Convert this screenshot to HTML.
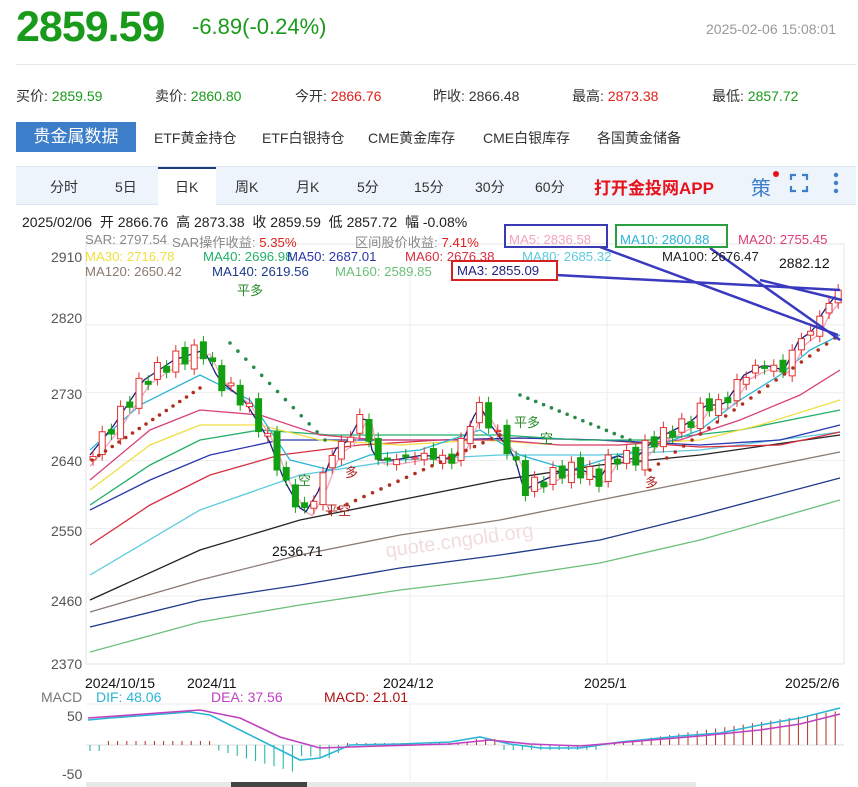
<!DOCTYPE html><html><head><meta charset="utf-8"><style>
body{margin:0;width:858px;height:787px;background:#fff;font-family:"Liberation Sans","Noto Sans CJK SC",sans-serif;overflow:hidden;position:relative}
.a{position:absolute;white-space:nowrap}
.g{color:#1a9a1a}.r{color:#e0201c}
.s{font-size:13.2px}
</style></head><body>
<div class="a g" style="left:16px;top:3px;font-size:43px;font-weight:bold;letter-spacing:-1px">2859.59</div>
<div class="a g" style="left:192px;top:14px;font-size:22px">-6.89(-0.24%)</div>
<div class="a" style="left:706px;top:21px;font-size:14px;color:#999">2025-02-06 15:08:01</div>
<div class="a" style="left:16px;top:64px;width:840px;border-top:1px solid #e6e6e6"></div>
<div class="a" style="left:0;top:86px;font-size:14px;color:#333">
<span class="a" style="left:16px">买价: <span class="g">2859.59</span></span>
<span class="a" style="left:155px">卖价: <span class="g">2860.80</span></span>
<span class="a" style="left:295px">今开: <span class="r">2866.76</span></span>
<span class="a" style="left:433px">昨收: 2866.48</span>
<span class="a" style="left:572px">最高: <span class="r">2873.38</span></span>
<span class="a" style="left:712px">最低: <span class="g">2857.72</span></span></div>
<div class="a" style="left:16px;top:122px;width:120px;height:30px;background:#3c7ec9;color:#fff;font-size:17px;line-height:30px;text-align:center">贵金属数据</div>
<div class="a" style="left:0;top:128px;font-size:14px;color:#333">
<span class="a" style="left:154px">ETF黄金持仓</span><span class="a" style="left:262px">ETF白银持仓</span><span class="a" style="left:368px">CME黄金库存</span><span class="a" style="left:483px">CME白银库存</span><span class="a" style="left:597px">各国黄金储备</span></div>
<div class="a" style="left:16px;top:166px;width:840px;height:37px;background:#eef4fc;border-top:1px solid #dde6f0;border-bottom:1px solid #dde6f0"></div>
<div class="a" style="left:158px;top:167px;width:58px;height:37px;background:#fff;border-top:2px solid #1d3a7a"></div>
<div class="a" style="left:0;top:177px;font-size:14px;color:#333">
<span class="a" style="left:50px">分时</span><span class="a" style="left:115px">5日</span><span class="a" style="left:175px">日K</span><span class="a" style="left:235px">周K</span><span class="a" style="left:296px">月K</span><span class="a" style="left:357px">5分</span><span class="a" style="left:414px">15分</span><span class="a" style="left:475px">30分</span><span class="a" style="left:535px">60分</span></div>
<div class="a" style="left:594px;top:174px;font-size:17px;font-weight:bold;color:#e8121a">打开金投网APP</div>
<div class="a" style="left:751px;top:172px;font-size:20px;color:#3c7ec9">策</div>
<div class="a" style="left:773px;top:171px;width:6px;height:6px;border-radius:3px;background:#e8121a"></div>
<svg class="a" style="left:789px;top:173px" width="20" height="20"><path d="M2 7V2H7M13 2H18V7M18 13V18H13M7 18H2V13" stroke="#3c7ec9" stroke-width="2.2" fill="none"/></svg>
<svg class="a" style="left:833px;top:172px" width="6" height="22"><circle cx="3" cy="3" r="2.2" fill="#3c7ec9"/><circle cx="3" cy="11" r="2.2" fill="#3c7ec9"/><circle cx="3" cy="19" r="2.2" fill="#3c7ec9"/></svg>
<div class="a" style="left:22px;top:212px;font-size:14px;color:#222">2025/02/06 &nbsp;开 2866.76 &nbsp;高 2873.38 &nbsp;收 2859.59 &nbsp;低 2857.72 &nbsp;幅 -0.08%</div>
<svg id="c" class="a" style="left:0;top:0" width="858" height="787"></svg>
<div class="a s" style="left:0;top:232px;color:#888">
<span class="a" style="left:85px">SAR: 2797.54</span><span class="a" style="left:172px">SAR操作收益: <span class="r">5.35%</span></span><span class="a" style="left:355px">区间股价收益: <span class="r">7.41%</span></span><span class="a" style="left:509px;color:#f3a4bf">MA5: 2836.58</span><span class="a" style="left:620px;color:#2bb5d5">MA10: 2800.88</span><span class="a" style="left:738px;color:#d8407a">MA20: 2755.45</span></div>
<div class="a" style="left:51px;top:249px;font-size:14px;color:#555">2910</div>
<div class="a s" style="left:0;top:249px">
<span class="a" style="left:85px;color:#f0de40">MA30: 2716.78</span><span class="a" style="left:203px;color:#22b06a">MA40: 2696.98</span><span class="a" style="left:287px;color:#2a36b0">MA50: 2687.01</span><span class="a" style="left:405px;color:#d83040">MA60: 2676.38</span><span class="a" style="left:522px;color:#5ccbe0">MA80: 2685.32</span><span class="a" style="left:662px;color:#222">MA100: 2676.47</span></div>
<div class="a s" style="left:0;top:264px">
<span class="a" style="left:85px;color:#8a7a72">MA120: 2650.42</span><span class="a" style="left:212px;color:#1e3a8a">MA140: 2619.56</span><span class="a" style="left:335px;color:#6cc07a">MA160: 2589.85</span></div>
<div class="a s" style="left:451px;top:260px;width:107px;height:21px;border:2px solid #d62020;box-sizing:border-box;color:#1e1e80;line-height:18px;padding-left:4px;background:#fff">MA3: 2855.09</div>
<div class="a" style="left:504px;top:224px;width:104px;height:24px;border:2px solid #3a3ab0;box-sizing:border-box"></div>
<div class="a" style="left:615px;top:224px;width:113px;height:24px;border:2px solid #2aa040;box-sizing:border-box"></div>
<div class="a" style="left:779px;top:255px;font-size:14px;color:#111">2882.12</div>
<div class="a" style="left:51px;top:310px;font-size:14px;color:#555">2820</div>
<div class="a" style="left:51px;top:386px;font-size:14px;color:#555">2730</div>
<div class="a" style="left:51px;top:453px;font-size:14px;color:#555">2640</div>
<div class="a" style="left:51px;top:523px;font-size:14px;color:#555">2550</div>
<div class="a" style="left:51px;top:593px;font-size:14px;color:#555">2460</div>
<div class="a" style="left:51px;top:656px;font-size:14px;color:#555">2370</div>
<div class="a" style="left:272px;top:543px;font-size:14px;color:#111">2536.71</div>
<div class="a" style="left:85px;top:675px;font-size:14px;color:#111">2024/10/15</div>
<div class="a" style="left:187px;top:675px;font-size:14px;color:#111">2024/11</div>
<div class="a" style="left:383px;top:675px;font-size:14px;color:#111">2024/12</div>
<div class="a" style="left:584px;top:675px;font-size:14px;color:#111">2025/1</div>
<div class="a" style="left:785px;top:675px;font-size:14px;color:#111">2025/2/6</div>
<div class="a" style="left:0;top:689px;font-size:14px">
<span class="a" style="left:41px;color:#777">MACD</span><span class="a" style="left:96px;color:#2bb5d5">DIF: 48.06</span><span class="a" style="left:211px;color:#c040c0">DEA: 37.56</span><span class="a" style="left:324px;color:#b01010">MACD: 21.01</span></div>
<div class="a" style="left:67px;top:708px;font-size:14px;color:#555">50</div>
<div class="a" style="left:62px;top:766px;font-size:14px;color:#555">-50</div>
<div class="a" style="left:237px;top:280px;font-size:13px;color:#2a8a2a">平多</div>
<div class="a" style="left:514px;top:412px;font-size:13px;color:#2a8a2a">平多</div>
<div class="a" style="left:325px;top:500px;font-size:13px;color:#b02020">平空</div>
<div class="a" style="left:540px;top:428px;font-size:13px;color:#2a8a2a">空</div>
<div class="a" style="left:298px;top:470px;font-size:13px;color:#2a8a2a">空</div>
<div class="a" style="left:345px;top:462px;font-size:13px;color:#b02020">多</div>
<div class="a" style="left:645px;top:472px;font-size:13px;color:#b02020">多</div>
<div class="a" style="left:385px;top:530px;font-size:20px;color:#f2dcdc;transform:rotate(-8deg)">quote.cngold.org</div>
<script>
var s=document.getElementById('c'),h='';
function Y(v){return 257+(2910-v)*0.7537}
function pl(p,c,w){h+='<polyline fill="none" stroke="'+c+'" stroke-width="'+(w||1.3)+'" points="'+p.map(function(q){return q.join(',')}).join(' ')+'"/>'}
h+='<rect x="86" y="244" width="758" height="420" fill="none" stroke="#e4e4e4"/>';
[410,607].forEach(function(x){h+='<line x1="'+x+'" y1="244" x2="'+x+'" y2="664" stroke="#eee"/><line x1="'+x+'" y1="704" x2="'+x+'" y2="780" stroke="#eee"/>'});
[Y(2820),Y(2730),Y(2640),Y(2550),Y(2460)].forEach(function(y){h+='<line x1="86" y1="'+y+'" x2="844" y2="'+y+'" stroke="#eee"/>'});
h+='<line x1="86" y1="704" x2="844" y2="704" stroke="#eee"/>';
function interp(P,x){for(var i=1;i<P.length;i++)if(x<=P[i][0]){var a=P[i-1],b=P[i];return a[1]+(b[1]-a[1])*(x-a[0])/(b[0]-a[0])}return P[P.length-1][1]}
var C=[[90,450],[110,425],[140,380],[170,360],[200,350],[215,380],[240,400],[265,440],[280,480],[300,515],[315,490],[330,450],[345,440],[360,410],[370,460],[390,460],[420,455],[450,460],[475,405],[490,430],[510,455],[520,490],[540,480],[560,470],[580,470],[595,480],[610,455],[630,460],[650,440],[670,430],[690,420],[700,405],[720,405],[740,375],[760,365],[780,370],[795,340],[810,330],[820,310],[838,288]];
pl([[90,600],[200,550],[300,520],[400,500],[500,480],[600,465],[700,455],[840,435]],'#222');
pl([[90,612],[200,580],[300,555],[400,535],[500,520],[600,500],[700,480],[840,452]],'#8a7a72');
pl([[90,627],[200,600],[300,585],[400,568],[500,555],[600,540],[700,515],[840,478]],'#1e3a8a');
pl([[90,652],[200,622],[300,605],[400,590],[500,578],[600,563],[700,540],[840,500]],'#6cc07a');
pl([[90,575],[200,510],[300,475],[400,460],[500,455],[600,455],[700,450],[840,432]],'#5ccbe0');
pl([[90,545],[150,505],[210,475],[280,455],[360,445],[440,440],[520,438],[600,440],[700,447],[780,445],[840,432]],'#d83040');
pl([[90,510],[150,480],[210,455],[280,440],[360,440],[440,440],[520,438],[600,440],[700,445],[780,440],[840,425]],'#2a36b0');
pl([[90,505],[150,465],[200,440],[260,430],[330,435],[420,435],[500,435],[580,440],[650,440],[740,430],[840,410]],'#22b06a');
pl([[90,490],[150,445],[200,425],[260,425],[320,440],[400,445],[480,440],[560,445],[620,445],[700,440],[760,425],[840,400]],'#f0de40');
pl([[90,480],[150,430],[200,410],[260,415],[320,435],[380,440],[440,440],[500,440],[560,445],[620,445],[680,440],[740,420],[800,395],[840,370]],'#d8407a');
pl([[90,450],[140,405],[200,375],[250,400],[290,460],[330,470],[370,455],[420,450],[480,430],[520,455],[570,470],[620,455],[660,445],[700,430],[740,400],[780,375],[810,350],[840,335]],'#2bb5d5');
var m5=[],m3=[];for(var x=90;x<=840;x+=6){m5.push([x,interp(C,x-10)+4]);m3.push([x,interp(C,x-4)])}
pl(m5,'#f3a4bf');pl(m3,'#1e1e80');
var prev=interp(C,86);
for(var x=90;x<=838;x+=9.2){var c=interp(C,x)+Math.sin(x*1.7)*8,o=prev+Math.cos(x*2.3)*5;var up=c<o,col=up?'#e23030':'#12a012';var t=Math.min(o,c),b=Math.max(o,c);if(b-t<1)b=t+1;
h+='<line x1="'+(x+3)+'" y1="'+(t-6)+'" x2="'+(x+3)+'" y2="'+(b+6)+'" stroke="'+col+'"/><rect x="'+x+'" y="'+t+'" width="6" height="'+(b-t)+'" fill="'+(up?'#fff':col)+'" stroke="'+col+'"/>';prev=c}
function dots(a,b,n,col){for(var i=0;i<=n;i++){var x=a[0]+(b[0]-a[0])*i/n,y=a[1]+(b[1]-a[1])*i/n;h+='<circle cx="'+x+'" cy="'+y+'" r="1.8" fill="'+col+'"/>'}}
dots([92,460],[200,388],16,'#b03020');dots([230,343],[325,440],12,'#2a8a4a');dots([330,512],[500,435],20,'#b03020');dots([520,395],[630,440],14,'#2a8a4a');dots([650,470],[835,338],22,'#b03020');
h+='<g stroke="#3a3ac0" stroke-width="2.5"><line x1="556" y1="275" x2="840" y2="290"/><line x1="600" y1="247" x2="838" y2="335"/><line x1="710" y1="248" x2="840" y2="340"/><line x1="760" y1="280" x2="842" y2="300"/></g>';
h+='<line x1="86" y1="745" x2="844" y2="745" stroke="#ddd"/>';
for(var x=90;x<=840;x+=9.2){var v;if(x<100)v=6;else if(x<210)v=-4;else if(x<330)v=6+(x-210)/4;else if(x<345)v=8;else if(x<470)v=-2;else if(x<500)v=-6;else if(x<600)v=5;else v=-(x-600)/7;
if(x>210&&x<330)v=3+((x-210)/3.5)*(x<300?1:.3);
var col=v>0?'#12b0a0':'#b03020';h+='<line x1="'+x+'" y1="745" x2="'+x+'" y2="'+(745+v)+'" stroke="'+col+'"/>'}
pl([[88,720],[110,718],[150,715],[190,712],[210,715],[240,730],[270,745],[300,760],[320,758],[350,745],[400,744],[450,742],[480,737],[510,744],[540,748],[580,748],[620,742],[680,736],[720,733],[760,725],[800,718],[840,708]],'#2bb5d5',1.6);
pl([[88,718],[130,715],[200,710],[240,718],[280,737],[320,748],[380,746],[450,744],[490,740],[530,744],[580,746],[640,741],[700,736],[760,730],[800,724],[840,714]],'#c040c0',1.6);
h+='<rect x="86" y="782" width="610" height="5" fill="#e8e8e8"/><rect x="231" y="782" width="76" height="5" fill="#444"/>';
s.innerHTML=h;
</script>
</body></html>
